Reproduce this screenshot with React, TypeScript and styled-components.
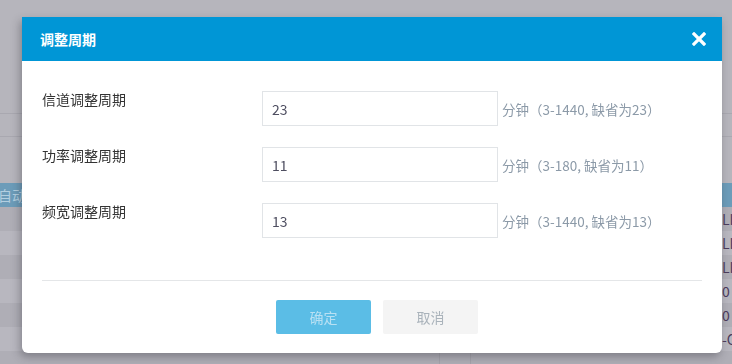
import React from "react";
import styled, { createGlobalStyle } from "styled-components";

const GlobalStyle = createGlobalStyle`
  html, body {
    margin: 0;
    padding: 0;
    width: 732px;
    height: 364px;
    overflow: hidden;
    font-family: "Noto Sans CJK SC", "Noto Sans", sans-serif;
  }
`;

// page behind the dialog (already dimmed by the mask)
const Page = styled.div`
  width: 732px;
  height: 364px;
  display: flex;
  flex-direction: column;
  background: #b6b5bc;
  overflow: hidden;
`;

const TopArea = styled.div`
  height: 113px;
  flex-shrink: 0;
  border-bottom: 1px solid #a9a8b0;
`;

const SubBar = styled.div`
  height: 22px;
  flex-shrink: 0;
  border-bottom: 1px solid #a9a8b0;
`;

const Gap = styled.div`
  height: 46px;
  flex-shrink: 0;
`;

const Grid = styled.div`
  display: grid;
  grid-template-columns: 440px 31px 20px 231px 1fr;
  flex-shrink: 0;
`;

const HeadRow = styled(Grid)`
  height: 24px;
  background: #6c9cb9;
  color: #b3cfe0;
  font-size: 14px;
  line-height: 24px;
`;

const DataRow = styled(Grid)<{ $odd?: boolean }>`
  height: 24px;
  background: ${(p) => (p.$odd ? "#b8b7bf" : "#afaeb6")};
  font-size: 14px;
  line-height: 24px;
  color: #4d3d5d;
`;

const Cell = styled.div<{ $line?: boolean }>`
  overflow: hidden;
  white-space: nowrap;
  border-right: ${(p) => (p.$line ? "1px solid #a4a3ab" : "none")};
`;

const HeadText = styled.span`
  margin-left: -2px;
`;

// dialog
const Mask = styled.div`
  position: fixed;
  inset: 0;
`;

const Dialog = styled.div`
  position: absolute;
  top: 17px;
  left: 22px;
  width: 700px;
  height: 336px;
  background: #fff;
  border-radius: 0 0 6px 6px;
  box-shadow: -2px 4px 8px rgba(40, 40, 50, 0.35);
  display: flex;
  flex-direction: column;
`;

const Header = styled.div`
  height: 44px;
  background: #0096d6;
  display: flex;
  align-items: center;
  justify-content: space-between;
  padding: 0 15px 0 18px;
  color: #fff;
`;

const Title = styled.div`
  font-size: 14px;
  font-weight: 700;
`;

const Close = styled.button`
  border: none;
  background: none;
  padding: 0;
  width: 16px;
  height: 16px;
  display: flex;
  align-items: center;
  justify-content: center;
  cursor: pointer;
`;

const Body = styled.div`
  padding: 30px 20px 0;
  display: flex;
  flex-direction: column;
  gap: 21px;
`;

const Row = styled.div`
  display: flex;
  align-items: center;
`;

const Label = styled.div`
  width: 220px;
  align-self: flex-start;
  font-size: 14px;
  line-height: 16px;
  color: #333;
`;

const Input = styled.input`
  box-sizing: border-box;
  width: 236px;
  height: 35px;
  border: 1px solid #e1e4e7;
  padding: 0 9px;
  font-family: inherit;
  font-size: 14px;
  color: #4e4e60;
  outline: none;
`;

const Hint = styled.span`
  margin-left: 4px;
  font-size: 13.5px;
  color: #8c9aa8;
`;

const Divider = styled.div`
  margin: 42px 20px 0;
  border-top: 1px solid #e4e6e8;
`;

const Footer = styled.div`
  display: flex;
  justify-content: center;
  gap: 12px;
  padding: 19px 0 0 10px;
`;

const Button = styled.button<{ $primary?: boolean }>`
  width: 95px;
  height: 34px;
  border: none;
  border-radius: 2px;
  font-family: inherit;
  font-size: 14px;
  background: ${(p) => (p.$primary ? "#5bbde6" : "#f4f4f4")};
  color: ${(p) => (p.$primary ? "#b8e0f3" : "#aab3bb")};
  cursor: pointer;
`;

const fields = [
  { label: "信道调整周期", value: "23", hint: "分钟（3-1440, 缺省为23）" },
  { label: "功率调整周期", value: "11", hint: "分钟（3-180, 缺省为11）" },
  { label: "频宽调整周期", value: "13", hint: "分钟（3-1440, 缺省为13）" },
];

const rightCol = ["LI", "LI", "LI", "0", "0", "-C", ""];

export default function App() {
  return (
    <>
      <GlobalStyle />
      <Page>
        <TopArea />
        <SubBar />
        <Gap />
        <HeadRow>
          <Cell><HeadText>自动</HeadText></Cell>
          <Cell />
          <Cell />
          <Cell />
          <Cell />
        </HeadRow>
        {rightCol.map((t, i) => (
          <DataRow key={i} $odd={i % 2 === 1}>
            <Cell $line />
            <Cell $line />
            <Cell />
            <Cell />
            <Cell>{t}</Cell>
          </DataRow>
        ))}
      </Page>
      <Mask>
        <Dialog>
          <Header>
            <Title>调整周期</Title>
            <Close aria-label="close">
              <svg width="14" height="14" viewBox="0 0 14 14">
                <path d="M2 2 L12 12 M12 2 L2 12" stroke="#fff" strokeWidth="3.2" strokeLinecap="square" />
              </svg>
            </Close>
          </Header>
          <Body>
            {fields.map((f) => (
              <Row key={f.label}>
                <Label>{f.label}</Label>
                <Input defaultValue={f.value} />
                <Hint>{f.hint}</Hint>
              </Row>
            ))}
          </Body>
          <Divider />
          <Footer>
            <Button $primary>确定</Button>
            <Button>取消</Button>
          </Footer>
        </Dialog>
      </Mask>
    </>
  );
}
